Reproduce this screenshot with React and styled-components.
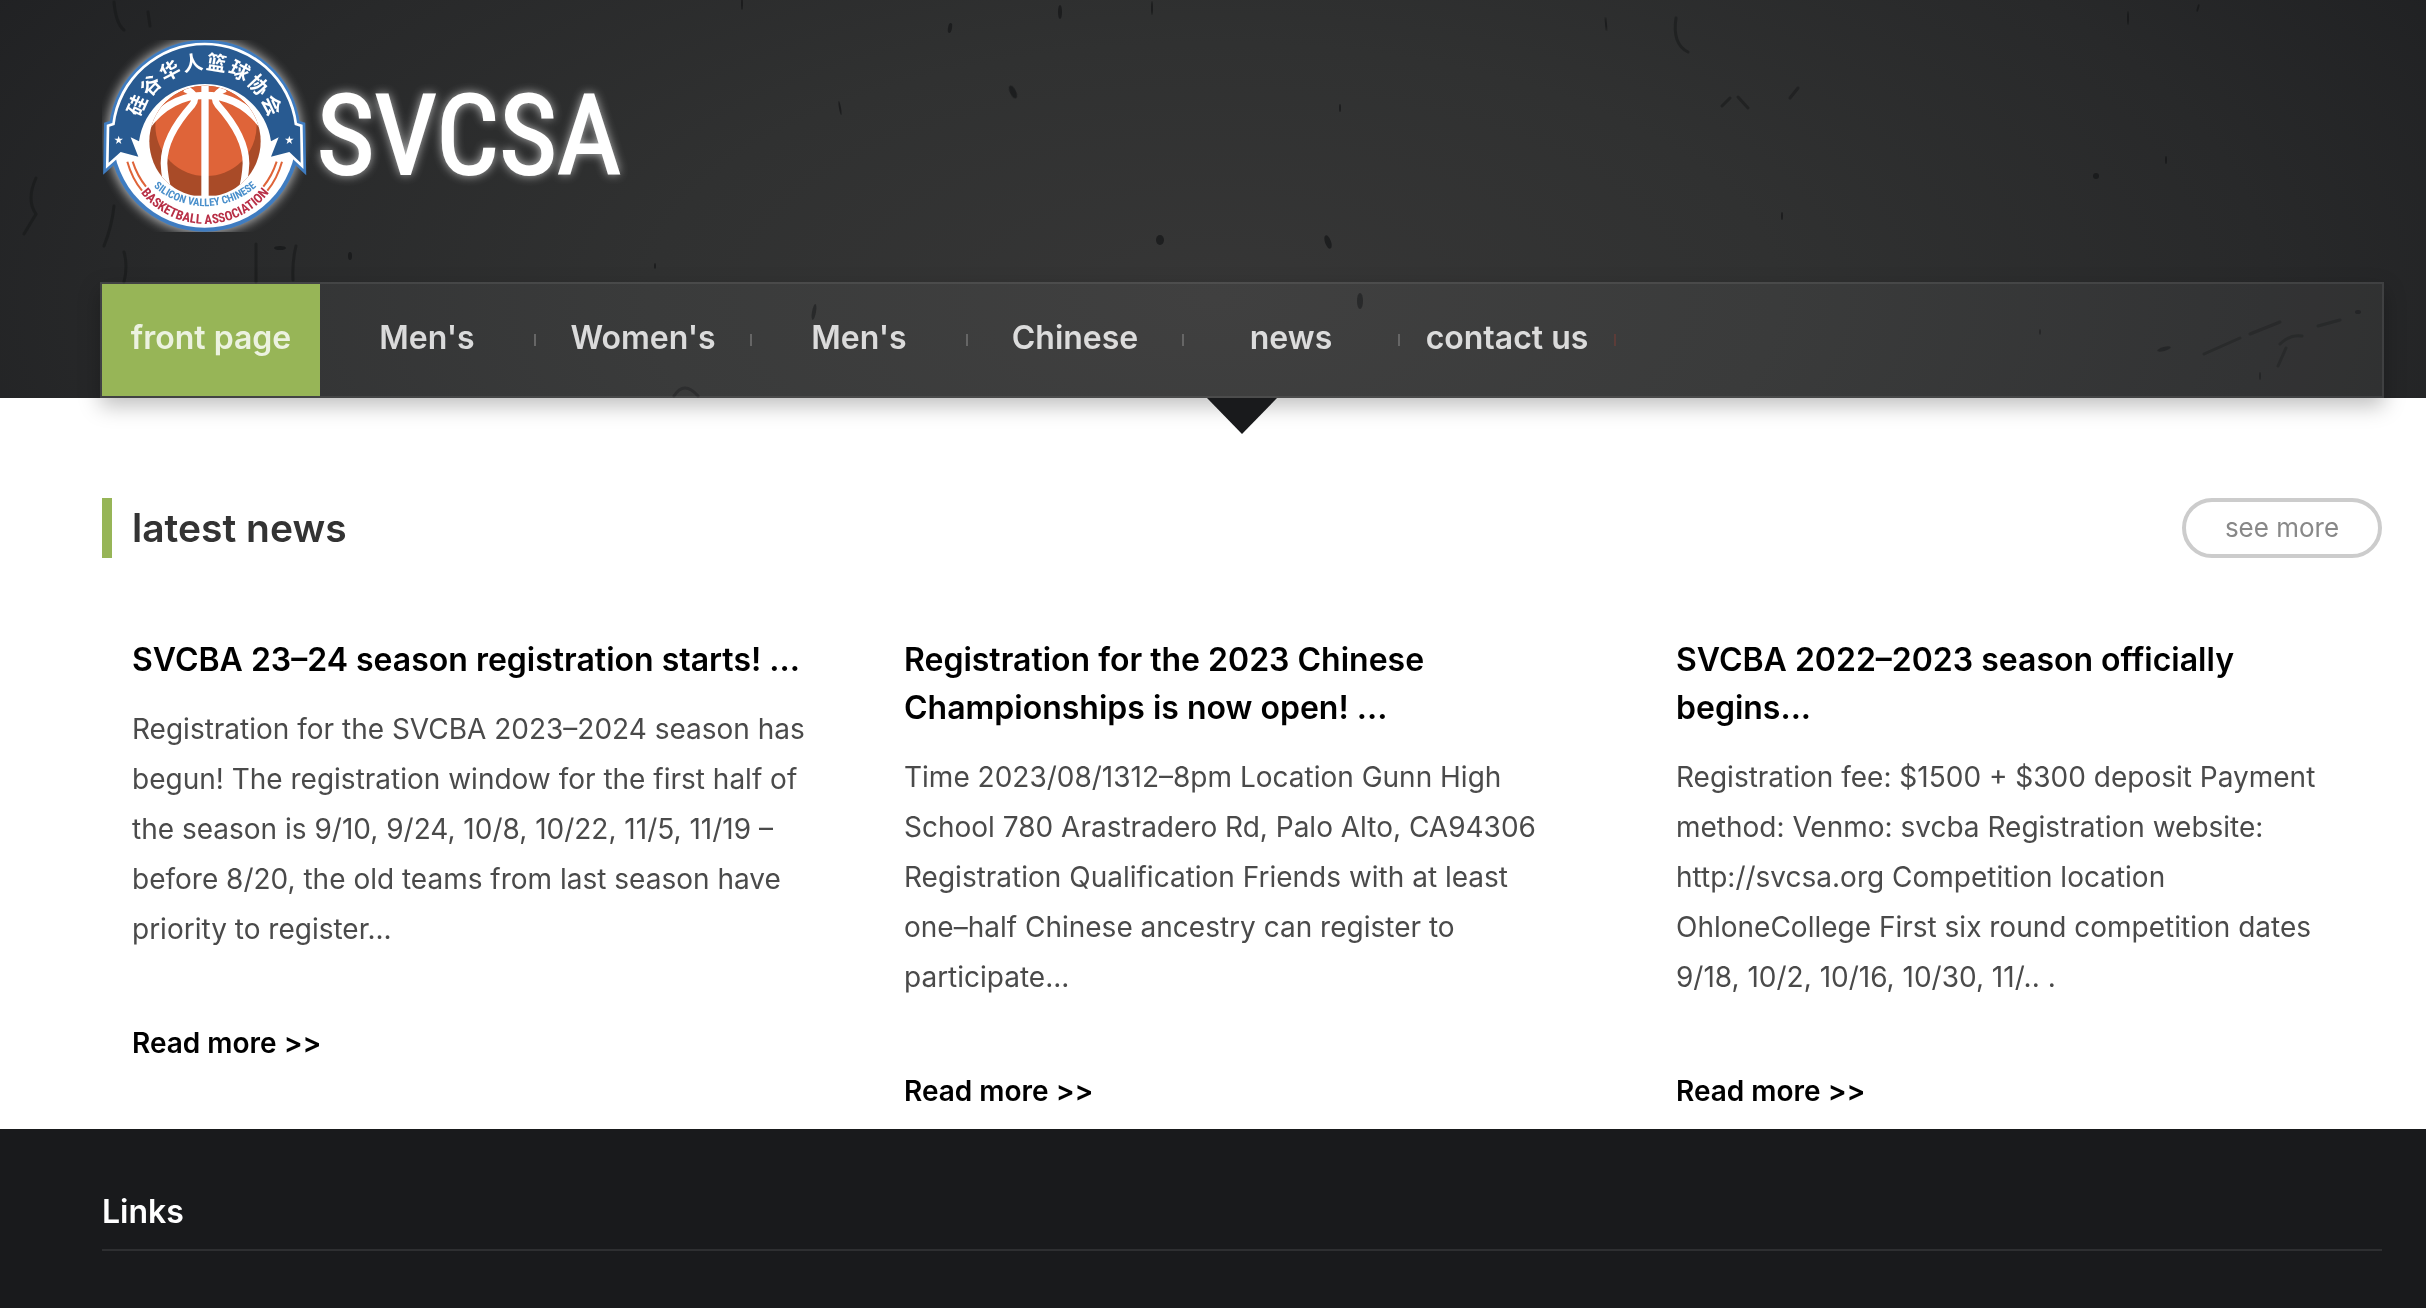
import React from "react";
import styled, { createGlobalStyle } from "styled-components";

const Global = createGlobalStyle`
  *, *::before, *::after { box-sizing: border-box; }
  body {
    margin: 0;
    background: #fff;
    font-family: Inter, "Noto Sans CJK SC", sans-serif;
    font-size: 28px;
    line-height: 50px;
    color: #4a4a4a;
  }
  h1, h2, h3, p, ul { margin: 0; padding: 0; }
  a { color: inherit; text-decoration: none; }
`;

const Page = styled.div`
  display: flex;
  flex-direction: column;
  min-height: 100vh;
`;

const Header = styled.header`
  display: grid;
  background: radial-gradient(ellipse 58% 160% at 50% 75%, #363636 0%, #303131 40%, #28292a 75%, #202123 100%);
  > * { grid-area: 1 / 1; min-width: 0; }
`;

const Texture = styled.svg`
  width: 100%;
  height: 0;
  min-height: 100%;
`;

const HeaderBody = styled.div`
  display: flex;
  flex-direction: column;
  gap: 50px;
  padding: 40px 42px 0 100px;
`;

const Brand = styled.a`
  display: block;
  height: 192px;
  padding-left: 2px;
  svg { display: block; width: 530px; height: 192px; }
`;

const Nav = styled.nav`
  border: 2px solid rgba(255, 255, 255, 0.12);
  background: rgba(255, 255, 255, 0.05);
  background-clip: padding-box;
  box-shadow: 0 8px 20px rgba(0, 0, 0, 0.25);
`;

const NavList = styled.ul`
  display: flex;
  list-style: none;
`;

const NavItem = styled.li`
  display: flex;
  align-items: center;
  width: ${(p) => (p.$active ? 218 : 216)}px;
  height: 112px;
  background: ${(p) => (p.$active ? "#97b557" : "transparent")};
  &::after {
    content: "";
    display: ${(p) => (p.$active ? "none" : "block")};
    width: 2px;
    height: 12px;
    background: ${(p) => (p.$last ? "#5c3c38" : "#666")};
  }
`;

const NavLink = styled.a`
  flex: 1;
  padding-bottom: 4px;
  text-align: center;
  white-space: nowrap;
  font-size: 32px;
  font-weight: 600;
  && { color: rgba(255, 255, 255, 0.82); }
`;

const Arrow = styled.svg`
  align-self: center;
  display: block;
  width: 70px;
  height: 36px;
`;

const News = styled.main`
  display: flex;
  flex-direction: column;
  padding: 0 44px 13px 102px;
`;

const SectionHead = styled.div`
  display: flex;
  justify-content: space-between;
  align-items: center;
  margin: 64px 0 78px;
`;

const SectionTitle = styled.h2`
  border-left: 10px solid #97b557;
  padding-left: 20px;
  font-size: 39px;
  line-height: 60px;
  font-weight: 600;
  color: #333;
`;

const MoreButton = styled.button`
  width: 200px;
  height: 60px;
  padding: 0;
  border: 4px solid #ccc;
  border-radius: 30px;
  background: transparent;
  font: inherit;
  font-size: 26px;
  line-height: 50px;
  color: #888;
`;

const Columns = styled.div`
  display: grid;
  grid-template-columns: repeat(3, 1fr);
  gap: 36px;
`;

const Card = styled.article`
  padding: 0 32px 0 30px;
`;

const CardTitle = styled.h3`
  margin-bottom: 20px;
  font-size: 32px;
  line-height: 48px;
  font-weight: 600;
  color: #000;
`;

const CardText = styled.p`
  margin-bottom: 64px;
`;

const ReadMore = styled.a`
  display: block;
  && { color: #000; }
  font-weight: 600;
`;

const Footer = styled.footer`
  flex: 1;
  padding: 58px 44px 0 102px;
  background: #191a1c;
`;

const FooterTitle = styled.h2`
  padding-bottom: 12px;
  border-bottom: 2px solid #2e2f31;
  font-size: 32px;
  line-height: 50px;
  font-weight: 600;
  color: #fff;
`;

const LogoText = styled.text`
  font-family: "Roboto Condensed", "Liberation Sans Narrow", "Liberation Sans", sans-serif;
`;

const specks = [
  [742, 4, 1, 6, 0], [1060, 12, 2, 7, 0], [950, 28, 2, 5, 10], [1152, 8, 1, 7, 0],
  [1606, 24, 1, 7, -5], [2128, 18, 1, 7, 0], [2198, 8, 1, 4, 15], [1013, 92, 3, 7, -25],
  [1160, 240, 4, 5, 0], [1328, 242, 3, 7, -20], [2096, 176, 3, 3, 0], [280, 248, 6, 2, 0],
  [1360, 301, 3, 8, 0], [814, 312, 2, 8, 10], [350, 256, 2, 4, 0], [840, 108, 1, 7, -10],
  [2164, 349, 7, 2, -15], [2358, 312, 3, 2, 0], [2040, 332, 1, 3, 0], [1782, 216, 1, 4, 0],
  [655, 266, 1, 3, 0], [1340, 108, 1, 4, 0], [2260, 376, 1, 4, 0], [2166, 160, 1, 4, 0],
];

const cracks = [
  "M114 2 Q116 24 124 30", "M148 12 L150 26", "M1676 18 Q1672 44 1688 52",
  "M1722 106 L1730 98", "M1738 97 L1748 108", "M36 178 Q26 200 36 214 L24 234", "M114 206 Q112 226 104 246",
  "M256 244 L256 282", "M296 246 Q292 262 293 280", "M124 252 Q128 266 124 282",
  "M674 396 Q684 380 698 396", "M1790 98 L1798 88",
  "M2204 354 Q2222 346 2240 338", "M2250 334 L2280 322", "M2280 344 Q2290 334 2302 336",
  "M2286 348 L2278 366", "M2318 326 L2340 320",
];

const chars = ["硅", "谷", "华", "人", "篮", "球", "协", "会"];

function Star({ x }) {
  return (
    <path
      transform={`translate(${x} 330)`}
      fill="#fff"
      d="M0-13 3-4H13L5 2 8 12 0 6-8 12-5 2-13-4H-3Z"
    />
  );
}

const band =
  "M74 285 A272 272 0 0 1 614 285 L630 290 L632 398 L598 366 L543 380 L566 322 L543 334 A200 200 0 0 0 147 334 L122 322 L145 380 L92 366 L56 398 L58 290 Z";

function Logo() {
  return (
    <svg viewBox="36 30 1590 576" role="img" aria-label="SVCSA">
      <defs>
        <clipPath id="ball"><circle cx="345" cy="334" r="167" /></clipPath>
        <filter id="glow" x="-20%" y="-30%" width="140%" height="160%">
          <feGaussianBlur stdDeviation="16" />
        </filter>
        <path id="lower-a" d="M150 422 A232 232 0 0 0 540 422" />
        <path id="lower-b" d="M112 410 A244 244 0 0 0 578 410" />
      </defs>
      <circle cx="343" cy="318" r="292" fill="#fff" opacity="0.65" filter="url(#glow)" />
      <path d={band} fill="#3f7cc0" stroke="#3f7cc0" strokeWidth="32" />
      <circle cx="344" cy="318" r="287" fill="#3f7cc0" />
      <circle cx="344" cy="318" r="275" fill="#fff" />
      <path d={band} fill="none" stroke="#fff" strokeWidth="16" />
      <path d={band} fill="#285a91" />
      <Star x={86} />
      <Star x={598} />
      {chars.map((c, i) => (
        <text
          key={c}
          transform={`rotate(${-65.5 + i * 18.7} 344 318) translate(344 118)`}
          textAnchor="middle"
          fontSize="60"
          fontWeight="700"
          fontFamily='"Noto Sans CJK SC", sans-serif'
          fill="#fff"
        >
          {c}
        </text>
      ))}
      <g clipPath="url(#ball)">
        <rect x="170" y="160" width="350" height="337" fill="#a94b28" />
        <circle cx="348" cy="286" r="152" fill="#df6439" />
        <g fill="none" stroke="#fff">
          <path d="M345 150V520" strokeWidth="22" />
          <path d="M170 290 Q240 196 345 196 Q450 196 520 290" strokeWidth="22" />
          <path d="M284 176 Q330 196 306 226 Q222 320 222 400 Q224 450 240 500" strokeWidth="20" />
          <path d="M406 176 Q360 196 384 226 Q468 320 468 400 Q466 450 450 500" strokeWidth="20" />
        </g>
      </g>
      <g stroke="#df6439" strokeWidth="6" fill="none">
        <path d="M112 395 Q126 445 156 482M128 395 Q142 438 168 470" />
        <path d="M576 395 Q562 445 532 482M560 395 Q546 438 520 470" />
      </g>
      <LogoText fontSize="32" fontWeight="700" fill="#4a8fcb" textAnchor="middle">
        <textPath href="#lower-a" startOffset="50%">SILICON VALLEY CHINESE</textPath>
      </LogoText>
      <LogoText fontSize="39" fontWeight="700" fill="#b82f46" textAnchor="middle">
        <textPath href="#lower-b" startOffset="50%">BASKETBALL ASSOCIATION</textPath>
      </LogoText>
      <LogoText x="680" y="432" fontSize="334" fill="#fff" opacity="0.8" filter="url(#glow)" aria-hidden="true">SVCSA</LogoText>
      <LogoText x="680" y="432" fontSize="334" fill="#fff" stroke="#fff" strokeWidth="6">SVCSA</LogoText>
    </svg>
  );
}

const nav = ["front page", "Men's", "Women's", "Men's", "Chinese", "news", "contact us"];

const articles = [
  {
    title: "SVCBA 23–24 season registration starts! ...",
    text: "Registration for the SVCBA 2023–2024 season has begun! The registration window for the first half of the season is 9/10, 9/24, 10/8, 10/22, 11/5, 11/19 – before 8/20, the old teams from last season have priority to register...",
  },
  {
    title: "Registration for the 2023 Chinese Championships is now open! ...",
    text: "Time 2023/08/1312–8pm Location Gunn High School 780 Arastradero Rd, Palo Alto, CA94306 Registration Qualification Friends with at least one–half Chinese ancestry can register to participate...",
  },
  {
    title: "SVCBA 2022–2023 season officially begins...",
    text: "Registration fee: $1500 + $300 deposit Payment method: Venmo: svcba Registration website: http://svcsa.org Competition location OhloneCollege First six round competition dates 9/18, 10/2, 10/16, 10/30, 11/.. .",
  },
];

export default function App() {
  return (
    <Page>
      <Global />
      <Header>
        <Texture viewBox="0 0 2426 398" preserveAspectRatio="none" aria-hidden="true">
          <g fill="#151617" opacity="0.7">
            {specks.map(([x, y, rx, ry, r], i) => (
              <ellipse key={i} cx={x} cy={y} rx={rx} ry={ry} transform={`rotate(${r} ${x} ${y})`} />
            ))}
          </g>
          <g fill="none" stroke="#151617" strokeWidth="3" strokeLinecap="round" opacity="0.5">
            {cracks.map((d) => <path key={d} d={d} />)}
          </g>
        </Texture>
        <HeaderBody>
          <Brand href="#"><Logo /></Brand>
          <Nav>
            <NavList>
              {nav.map((label, i) => (
                <NavItem key={i} $active={i === 0} $last={i === nav.length - 1}>
                  <NavLink href="#">{label}</NavLink>
                </NavItem>
              ))}
            </NavList>
          </Nav>
        </HeaderBody>
      </Header>
      <News>
        <Arrow viewBox="0 0 70 36" aria-hidden="true"><path d="M0 0H70L35 36Z" fill="#191a1c" /></Arrow>
        <SectionHead>
          <SectionTitle>latest news</SectionTitle>
          <MoreButton type="button">see more</MoreButton>
        </SectionHead>
        <Columns>
          {articles.map((a) => (
            <Card key={a.title}>
              <CardTitle>{a.title}</CardTitle>
              <CardText>{a.text}</CardText>
              <ReadMore href="#">Read more &gt;&gt;</ReadMore>
            </Card>
          ))}
        </Columns>
      </News>
      <Footer>
        <FooterTitle>Links</FooterTitle>
      </Footer>
    </Page>
  );
}
